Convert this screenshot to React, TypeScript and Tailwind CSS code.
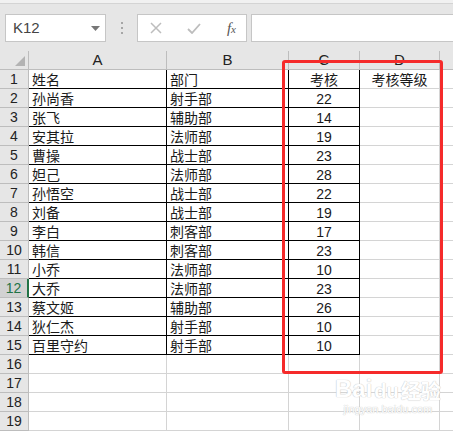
import React from 'react'

const rows: [string, string, string, string][] = [
  ['姓名', '部门', '考核', '考核等级'],
  ['孙尚香', '射手部', '22', ''],
  ['张飞', '辅助部', '14', ''],
  ['安其拉', '法师部', '19', ''],
  ['曹操', '战士部', '23', ''],
  ['妲己', '法师部', '28', ''],
  ['孙悟空', '战士部', '22', ''],
  ['刘备', '战士部', '19', ''],
  ['李白', '刺客部', '17', ''],
  ['韩信', '刺客部', '23', ''],
  ['小乔', '法师部', '10', ''],
  ['大乔', '法师部', '23', ''],
  ['蔡文姬', '辅助部', '26', ''],
  ['狄仁杰', '射手部', '10', ''],
  ['百里守约', '射手部', '10', ''],
]

const cjk = "font-['Noto_Sans_CJK_SC',sans-serif]"
const num = "font-['Liberation_Sans',Arial,sans-serif]"

export default function App() {
  const allRows = [...rows, ...Array.from({ length: 4 }, () => ['', '', '', ''] as [string, string, string, string])]

  return (
    <div className="w-[453px] h-[432px] overflow-hidden bg-white text-[#1a1a1a]">
      {/* Toolbar */}
      <div className="h-[4px] bg-[#f1f1f1] border-b border-[#d4d4d4]" />
      <div className="h-[47px] bg-[#e6e6e6] flex items-start pt-[10px] pl-[5px]">
        <div className="w-[101px] h-[28px] bg-white border border-[#c6c6c6] flex items-center justify-between pl-[7px] pr-[5px]">
          <span className={`${num} text-[15px] text-[#444]`}>K12</span>
          <svg width="9" height="5" viewBox="0 0 9 5">
            <path d="M0 0h9L4.5 5z" fill="#777" />
          </svg>
        </div>
        <div className="w-[31px] h-[28px] flex flex-col items-center justify-center gap-[3px]">
          <span className="w-[2px] h-[2px] bg-[#a6a6a6]" />
          <span className="w-[2px] h-[2px] bg-[#a6a6a6]" />
          <span className="w-[2px] h-[2px] bg-[#a6a6a6]" />
        </div>
        <div className="w-[110px] h-[28px] bg-white border border-[#c6c6c6] flex items-center pl-[12px] pr-[10px] justify-between">
          <svg width="12" height="12" viewBox="0 0 12 12">
            <path d="M1 1l10 10M11 1L1 11" stroke="#bdbdbd" strokeWidth="1.5" />
          </svg>
          <svg width="14" height="11" viewBox="0 0 14 11">
            <path d="M1 6l4 4L13 1" stroke="#bdbdbd" strokeWidth="1.8" fill="none" />
          </svg>
          <span className="font-['Liberation_Serif',serif] italic text-[15px] text-[#555] leading-none">
            f<span className="text-[11px]">x</span>
          </span>
        </div>
        <div className="flex-1 ml-[4px] h-[28px] bg-white border border-[#c6c6c6] border-r-0" />
      </div>

      {/* Sheet */}
      <div className="relative">
        <div className="grid grid-cols-[29px_138px_122px_71px_80px_1fr]">
          {/* Column header */}
          <div className="h-[19px] bg-[#e6e6e6] border-b border-r border-[#bdbdbd] flex items-end justify-end p-[3px]">
            <svg width="10" height="10" viewBox="0 0 10 10">
              <path d="M10 0v10H0z" fill="#b3b3b3" />
            </svg>
          </div>
          {['A', 'B', 'C', 'D', ''].map((c, i) => (
            <div
              key={i}
              className={`h-[19px] bg-[#e6e6e6] border-b border-[#bdbdbd] ${i < 4 ? 'border-r' : ''} flex items-center justify-center ${num} text-[15px] text-[#222]`}
            >
              {c}
            </div>
          ))}

          {allRows.map((r, idx) => {
            const n = idx + 1
            const table = n <= 15
            const selected = n === 12
            const tb = table ? 'border-[#000]' : 'border-[#d4d4d4]'
            return (
              <React.Fragment key={n}>
                <div
                  className={`h-[19px] border-b border-r flex items-center justify-center ${num} text-[14px] ${
                    selected
                      ? 'bg-[#d2d2d2] text-[#217346] border-r-[2px] border-r-[#217346] border-b-[#bdbdbd]'
                      : 'bg-[#e6e6e6] text-[#222] border-[#bdbdbd]'
                  }`}
                >
                  {n}
                </div>
                <div className={`h-[19px] border-b border-r ${tb} flex items-center pl-[3px] ${cjk} text-[14px] leading-none`}>
                  {r[0]}
                </div>
                <div className={`h-[19px] border-b border-r ${tb} flex items-center pl-[3px] ${cjk} text-[14px] leading-none`}>
                  {r[1]}
                </div>
                <div
                  className={`h-[19px] border-b border-r ${tb} flex items-center justify-center ${
                    n === 1 ? `${cjk} text-[14px]` : `${num} text-[14px] pt-[2px]`
                  } leading-none`}
                >
                  {r[2]}
                </div>
                <div
                  className={`h-[19px] border-b border-r ${n === 1 ? 'border-l-0' : ''} border-b-[#d4d4d4] border-r-[#d4d4d4] flex items-center justify-center ${cjk} text-[14px] leading-none`}
                >
                  {r[3]}
                </div>
                <div className="h-[19px] border-b border-[#d4d4d4]" />
              </React.Fragment>
            )
          })}
        </div>

        {/* Red highlight box */}
        <div className="absolute left-[282px] top-[9px] w-[161px] h-[314px] border-[3px] border-[#f52a2a] rounded-[3px] pointer-events-none" />

        {/* Watermark */}
        <div className="absolute left-[335px] top-[326px] flex flex-col items-center pointer-events-none select-none">
          <div className="flex items-end gap-[2px]">
            <span className={`${num} font-bold text-[24px] leading-none text-white [text-shadow:0_0_1px_#c8c8c8,0_0_1px_#c8c8c8]`}>
              Bai
            </span>
            <span className={`${num} font-bold text-[20px] leading-none text-white [text-shadow:0_0_1px_#c8c8c8,0_0_1px_#c8c8c8]`}>
              du
            </span>
            <span className={`${cjk} font-bold text-[20px] leading-none text-white [text-shadow:0_0_1px_#c8c8c8,0_0_1px_#c8c8c8]`}>
              经验
            </span>
          </div>
          <span className={`${num} text-[11px] leading-none mt-[3px] text-white [text-shadow:0_0_1px_#c8c8c8,0_0_1px_#c8c8c8]`}>
            jingyan.baidu.com
          </span>
        </div>
      </div>
    </div>
  )
}
